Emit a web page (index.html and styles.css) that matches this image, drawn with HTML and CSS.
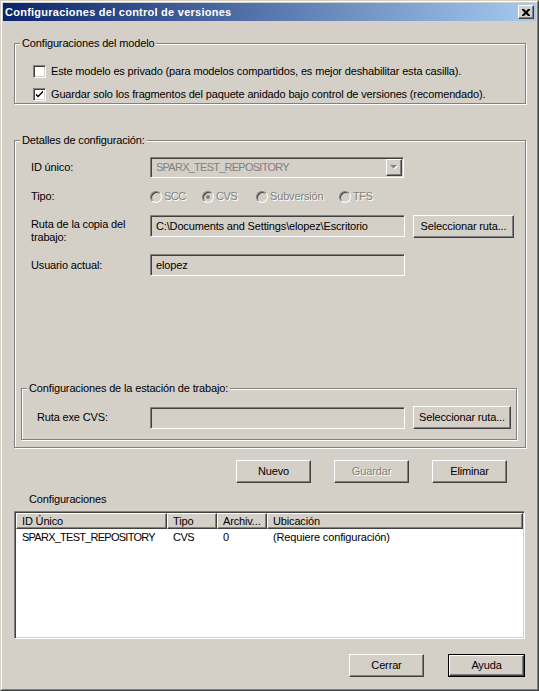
FILE: index.html
```html
<!DOCTYPE html>
<html lang="es">
<head>
<meta charset="utf-8">
<title>Configuraciones del control de versiones</title>
<link rel="stylesheet" href="styles.css">
</head>
<body>
<div class="window">
  <div class="frame">
    <div class="titlebar">
      <span class="title">Configuraciones del control de versiones</span>
      <span class="close btn"><svg width="8" height="7" viewBox="0 0 8 7"><path d="M0 0h2l2 2 2-2h2v1l-2.5 2.5L8 6v1H6L4 5 2 7H0V6l2.5-2.5L0 1z" fill="#000"/></svg></span>
    </div>
    <div class="content">
      <section class="group g-model">
        <div class="legend">Configuraciones del modelo</div>
        <div class="check r1"><span class="box"></span><span>Este modelo es privado (para modelos compartidos, es mejor deshabilitar esta casilla).</span></div>
        <div class="check r2"><span class="box"><svg width="9" height="9" viewBox="0 0 9 9"><path d="M1 3.5v2l2 2 5-5v-2l-5 5z" fill="#000"/></svg></span><span>Guardar solo los fragmentos del paquete anidado bajo control de versiones (recomendado).</span></div>
      </section>

      <section class="group g-details">
        <div class="legend">Detalles de configuración:</div>
        <div class="row row-id">
          <span class="lbl">ID único:</span>
          <div class="combo field">
            <span class="combo-text caps">SPARX_TEST_REPOSITORY</span>
            <span class="drop btn"><svg width="8" height="5" viewBox="0 0 8 5"><path d="M1 1h7l-3.5 3.5z" fill="#fff"/><path d="M0 0h7l-3.5 3.5z" fill="#808080"/></svg></span>
          </div>
        </div>
        <div class="row row-type">
          <span class="lbl">Tipo:</span>
          <div class="radios">
            <span class="radio-item w1"><span class="radio"></span><span class="dis caps-s">SCC</span></span>
            <span class="radio-item w2"><span class="radio on"></span><span class="dis caps-s">CVS</span></span>
            <span class="radio-item w3"><span class="radio"></span><span class="dis">Subversión</span></span>
            <span class="radio-item"><span class="radio"></span><span class="dis caps-s">TFS</span></span>
          </div>
        </div>
        <div class="row row-path">
          <span class="lbl two">Ruta de la copia del<br>trabajo:</span>
          <div class="text field">C:\Documents and Settings\elopez\Escritorio</div>
          <span class="btn pbtn">Seleccionar ruta...</span>
        </div>
        <div class="row row-user">
          <span class="lbl">Usuario actual:</span>
          <div class="text field">elopez</div>
        </div>

        <section class="group g-station">
          <div class="legend">Configuraciones de la estación de trabajo:</div>
          <div class="row row-exe">
            <span class="lbl lbl-exe">Ruta exe CVS:</span>
            <div class="text field"></div>
            <span class="btn pbtn pbtn2">Seleccionar ruta...</span>
          </div>
        </section>
      </section>

      <div class="actions">
        <span class="btn abtn">Nuevo</span>
        <span class="btn abtn"><span class="dis">Guardar</span></span>
        <span class="btn abtn">Eliminar</span>
      </div>

      <div class="list-title">Configuraciones</div>
      <div class="list">
        <div class="lhead">
          <span class="hc c1">ID Único</span>
          <span class="hc c2">Tipo</span>
          <span class="hc c3">Archiv...</span>
          <span class="hc c4">Ubicación</span>
        </div>
        <div class="lrow">
          <span class="rc c1 caps">SPARX_TEST_REPOSITORY</span>
          <span class="rc c2 caps-s">CVS</span>
          <span class="rc c3">0</span>
          <span class="rc c4">(Requiere configuración)</span>
        </div>
      </div>

      <div class="footer">
        <span class="btn abtn">Cerrar</span>
        <span class="default"><span class="btn abtn">Ayuda</span></span>
      </div>
    </div>
  </div>
</div>
</body>
</html>
```

FILE: styles.css
```css
* { box-sizing: border-box; margin: 0; padding: 0; }
html, body { width: 539px; height: 691px; overflow: hidden; background: #d4d0c8; }
body { font: 11px/13px "Liberation Sans", Arial, sans-serif; color: #000; letter-spacing: -0.15px; }

.window {
  width: 539px; height: 691px;
  border: 1px solid; border-color: #d4d0c8 #404040 #404040 #d4d0c8;
}
.frame {
  height: 100%;
  border: 1px solid; border-color: #fff #808080 #808080 #fff;
  padding: 1px;
  display: flex; flex-direction: column;
}
.titlebar {
  height: 18px; flex: none;
  background: linear-gradient(to right, #0a246a, #a6caf0);
  display: flex; align-items: center; justify-content: space-between;
  padding: 0 2px 0 2px;
}
.title { color: #fff; font-weight: bold; font-size: 11px; letter-spacing: 0.25px; }

.btn {
  background: #d4d0c8;
  border: 1px solid; border-color: #fff #404040 #404040 #fff;
  box-shadow: inset -1px -1px 0 #808080;
  display: flex; align-items: center; justify-content: center;
}
.close { width: 16px; height: 14px; }
.field {
  border: 1px solid; border-color: #808080 #fff #fff #808080;
  box-shadow: inset 1px 1px 0 #404040;
  background: #d4d0c8;
}
.dis { color: #808080; text-shadow: 1px 1px 0 #fff; }
.caps { letter-spacing: -0.75px; }
.caps-s { letter-spacing: -0.5px; }

.content { flex: 1; padding: 0 10px 0 11px; display: flex; flex-direction: column; }

.group {
  border: 1px solid #808080;
  box-shadow: 1px 1px 0 #fff, inset 1px 1px 0 #fff;
}
.legend {
  margin: -7px 0 0 5px; padding: 0 2px;
  background: #d4d0c8; width: max-content; height: 13px;
}

.g-model { margin-top: 22px; height: 61px; }
.check { display: flex; align-items: center; height: 13px; margin-left: 18px; }
.check.r1 { margin-top: 15px; }
.check.r2 { margin-top: 10px; }
.box {
  width: 13px; height: 13px; flex: none; margin-right: 5px;
  background: #fff;
  border: 1px solid; border-color: #808080 #fff #fff #808080;
  box-shadow: inset 1px 1px 0 #404040, inset -1px -1px 0 #d4d0c8;
  display: flex; align-items: center; justify-content: center;
}

.g-details {
  margin-top: 36px; height: 308px;
  padding: 0 0 7px 0;
  display: flex; flex-direction: column;
}
.row { display: flex; align-items: center; margin-left: 16px; }
.lbl { width: 119px; flex: none; }
.row-id { margin-top: 10px; height: 21px; }
.combo { width: 254px; height: 21px; display: flex; align-items: center; justify-content: space-between; padding: 1px 1px 1px 5px; }
.combo-text { color: #808080; }
.drop { width: 16px; height: 17px; }
.row-type { margin-top: 12px; height: 13px; }
.radios { display: flex; align-items: center; }
.radio-item { display: flex; align-items: center; }
.radio-item.w1 { width: 52px; }
.radio-item.w2 { width: 54px; }
.radio-item.w3 { width: 83px; }
.radio {
  width: 12px; height: 12px; border-radius: 50%; flex: none; margin-right: 2px;
  border: 1px solid; border-color: #808080 #fff #fff #808080;
  box-shadow: inset 1px 1px 0 #404040;
  background: #d4d0c8;
  display: flex; align-items: center; justify-content: center;
}
.radio.on::after { content: ""; width: 4px; height: 4px; border-radius: 50%; background: #808080; }
.row-path { margin-top: 12px; align-items: flex-start; }
.lbl.two { padding-top: 3px; }
.text { width: 255px; height: 22px; padding: 4px 0 0 5px; white-space: nowrap; overflow: hidden; }
.pbtn { width: 101px; height: 23px; margin-left: 8px; }
.row-user { margin-top: 10px; }

.g-station { margin: auto 8px 0 6px; height: 52px; }
.row-exe { margin-top: 11px; margin-left: 15px; }
.lbl-exe { width: 113px; }
.pbtn2 { width: 98px; }

.actions { display: flex; justify-content: flex-end; gap: 23px; margin-top: 12px; padding-right: 19px; }
.abtn { width: 75px; height: 23px; }

.list-title { margin: 10px 0 0 15px; height: 13px; }
.list {
  margin-top: 5px; width: 511px; height: 128px;
  background: #fff;
  border: 1px solid; border-color: #808080 #fff #fff #808080;
  box-shadow: inset 1px 1px 0 #404040, inset -1px -1px 0 #d4d0c8;
  padding: 1px;
}
.lhead { display: flex; height: 16px; }
.hc {
  background: #d4d0c8; height: 16px; padding: 1px 0 0 5px;
  border: 1px solid; border-color: #fff #404040 #404040 #fff;
  box-shadow: inset -1px -1px 0 #808080;
  white-space: nowrap; overflow: hidden;
}
.c1 { width: 151px; }
.c2 { width: 50px; }
.c3 { width: 50px; }
.c4 { flex: 1; }
.lrow { display: flex; height: 14px; align-items: center; margin-top: 1px; }
.rc { padding-left: 6px; white-space: nowrap; }

.footer { display: flex; justify-content: flex-end; align-items: center; gap: 24px; margin-top: 15px; padding-right: 1px; }
.default { border: 1px solid #000; display: flex; }
.default .abtn { height: 21px; }
```
